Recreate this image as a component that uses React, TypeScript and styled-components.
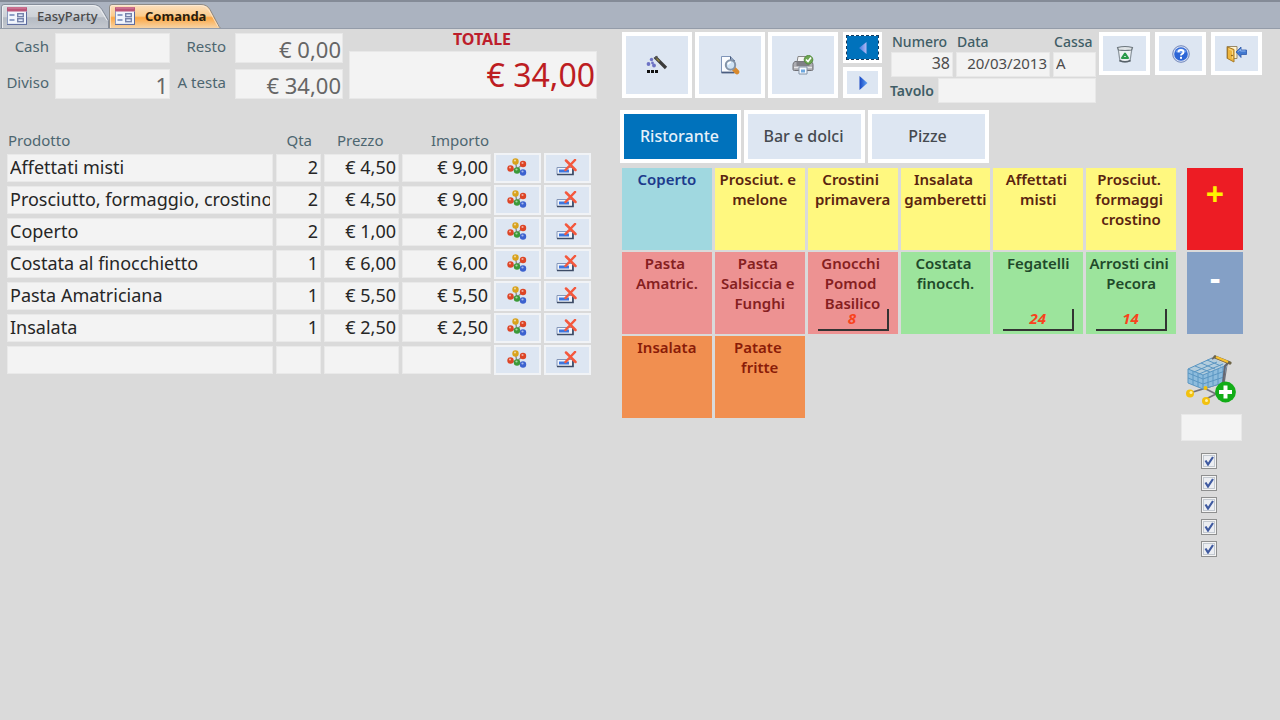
import React, { useState } from "react";
import styled, { createGlobalStyle } from "styled-components";

const GlobalStyle = createGlobalStyle`
  * { box-sizing: border-box; }
  body { margin: 0; background: #dadada; font-family: "Noto Sans", "Open Sans", sans-serif; }
  button, input { font-family: inherit; border-radius: 0; }
`;

const TabStrip = styled.nav`
  display: flex;
  height: 29px;
  padding: 2px 0 0 1px;
  background: #abb3c0;
  border-top: 2px solid #848b97;
  border-bottom: 1px solid #949ca9;
  overflow: hidden;
`;

const FormTab = styled.button<{ $active?: boolean }>`
  position: relative;
  display: flex;
  align-items: center;
  width: ${(p) => (p.$active ? 116 : 108)}px;
  height: 26px;
  padding: 0 0 3px 6px;
  border: 0;
  background: none;
  color: ${(p) => (p.$active ? "#2a1c0c" : "#4a4a4a")};
  font-size: 13px;
  font-weight: ${(p) => (p.$active ? 700 : 500)};
  white-space: nowrap;
`;

const TabShape = styled.svg`
  position: absolute;
  left: 0;
  top: 0;
`;

const TabContent = styled.span`
  position: relative;
  display: flex;
  align-items: center;
  gap: 10px;
`;

const Main = styled.main`
  display: grid;
  grid-template-columns: minmax(0, 593fr) minmax(0, 642fr);
  column-gap: 23px;
  padding: 3px 18px 24px 4px;
`;

const OrderPanel = styled.section``;

const Summary = styled.div`
  display: grid;
  grid-template-columns: 43px 115px 53px 108px minmax(0, 1fr);
  grid-template-rows: 30px 30px;
  gap: 6px;
  padding: 1px 0 0 2px;
`;

const SummaryLabel = styled.label<{ $inset?: number }>`
  padding-right: ${(p) => p.$inset ?? 0}px;
  color: #4d6670;
  font-size: 15px;
  line-height: 27px;
  text-align: right;
  white-space: nowrap;
`;

const Field = styled.input<{ $size?: number; $align?: string }>`
  width: 100%;
  min-width: 0;
  padding: 0 2px;
  border: 1px solid #e8e8e8;
  background: #f3f3f3;
  color: #4c4c4c;
  font-size: ${(p) => p.$size ?? 16}px;
  text-align: ${(p) => p.$align ?? "left"};
`;

const SummaryField = styled(Field)`
  height: 30px;
  padding: 2px 1px 0;
  color: #666;
`;

const TotalBox = styled.div`
  grid-column: 5;
  grid-row: 1 / 3;
  display: flex;
  flex-direction: column;
`;

const TotalLabel = styled.label`
  height: 18px;
  padding-left: 18px;
  color: #bd1d2b;
  font-size: 16px;
  font-weight: 700;
  line-height: 13px;
  text-align: center;
`;

const TotalField = styled(Field)`
  height: 48px;
  padding: 0 1px 1px;
  color: #bd1d22;
`;

const OrderTable = styled.table`
  width: 100%;
  margin-top: 28px;
  padding-right: 3px;
  table-layout: fixed;
  border-collapse: separate;
  border-spacing: 3px 4px;
`;

const HeadCell = styled.th<{ $align?: string; $inset?: number }>`
  height: 19px;
  padding: 0 ${(p) => p.$inset ?? 2}px;
  color: #4d6670;
  font-size: 15px;
  font-weight: 400;
  line-height: 19px;
  text-align: ${(p) => p.$align ?? "left"};
`;

const Cell = styled.td<{ $align?: string }>`
  height: 28px;
  padding: 0 3px 2px;
  background: #f3f3f3;
  box-shadow: inset 0 0 0 1px #e9e9e9;
  color: #262626;
  font-size: 18px;
  font-weight: 400;
  line-height: 26px;
  text-align: ${(p) => p.$align ?? "left"};
`;

const Clip = styled.div`
  overflow: hidden;
  white-space: nowrap;
`;

const ActionCell = styled.td`
  height: 28px;
  padding: 0;
`;

const RowButton = styled.button`
  display: flex;
  align-items: center;
  justify-content: center;
  width: 100%;
  height: 30px;
  margin: -1px 0;
  padding: 0 2px 1px 0;
  border: 2px solid #f1f3f6;
  background: #dde6f2;
`;

const MenuPanel = styled.section``;

const Toolbar = styled.div`
  display: flex;
  align-items: flex-start;
  padding-left: 2px;
`;

const ToolGroup = styled.div<{ $column?: boolean; $gap: number }>`
  display: flex;
  flex: none;
  flex-direction: ${(p) => (p.$column ? "column" : "row")};
  gap: ${(p) => p.$gap}px;
`;

const NavGroup = styled(ToolGroup)`
  margin: 0 7px 0 5px;
`;

const WindowGroup = styled(ToolGroup)`
  margin-left: 3px;
`;

const ToolButton = styled.button<{ $w: number; $h: number; $active?: boolean }>`
  display: flex;
  align-items: center;
  justify-content: center;
  width: ${(p) => p.$w}px;
  height: ${(p) => p.$h}px;
  padding: 0;
  border: 4px solid #fff;
  background: ${(p) => (p.$active ? "#0072bc" : "#dde6f2")};
  outline: ${(p) => (p.$active ? "1px dashed #173a5c" : "none")};
  outline-offset: -4px;
`;

const Details = styled.div`
  display: flex;
  flex: 1;
  flex-direction: column;
  gap: 1px;
  min-width: 0;
`;

const DetailRow = styled.div`
  display: grid;
  grid-template-columns: 62px minmax(0, 1fr) 43px;
  gap: 3px;
  padding-left: 2px;
`;

const DetailItem = styled.div`
  display: flex;
  flex-direction: column;
`;

const DetailLabel = styled.label<{ $strong?: boolean }>`
  padding-left: 1px;
  color: #3f5d66;
  font-size: 14px;
  font-weight: ${(p) => (p.$strong ? 600 : 500)};
  line-height: 20px;
`;

const DetailField = styled(Field)`
  height: 25px;
  padding-bottom: 3px;
`;

const TavoloRow = styled.div`
  display: flex;
  align-items: center;
  gap: 4px;
`;

const Categories = styled.div`
  display: flex;
  gap: 3px;
  margin-top: 7px;
`;

const CategoryButton = styled.button<{ $active?: boolean }>`
  width: 121px;
  height: 53px;
  padding: 0 2px 1px 0;
  border: 4px solid #fff;
  background: ${(p) => (p.$active ? "#0072bc" : "#dde6f2")};
  color: ${(p) => (p.$active ? "#e6f1fa" : "#454a50")};
  font-size: 16px;
  font-weight: 500;
`;

const Board = styled.div`
  display: flex;
  gap: 3px;
  margin-top: 5px;
  padding: 0 19px 0 2px;
`;

const Tiles = styled.div`
  display: grid;
  flex: 1;
  grid-template-columns: repeat(6, minmax(0, 1fr));
  grid-auto-rows: 82px;
  gap: 2px 3px;
  align-content: start;
`;

const tones = {
  blue: ["#a0d8e0", "#1c3a8c"],
  yellow: ["#fff87f", "#5a2410"],
  red: ["#ed9292", "#85201f"],
  green: ["#9ce49c", "#1f4a2a"],
  orange: ["#f18f50", "#8a1c08"],
};

const Tile = styled.button<{ $tone: keyof typeof tones }>`
  position: relative;
  display: flex;
  align-items: flex-start;
  justify-content: center;
  padding: 1px 0 0;
  border: 0;
  background: ${(p) => tones[p.$tone][0]};
  color: ${(p) => tones[p.$tone][1]};
  font-size: 15px;
  font-weight: 600;
  line-height: 20px;
  white-space: pre;
  text-align: center;
`;

const Stock = styled.span`
  position: absolute;
  right: 9px;
  bottom: 3px;
  width: 71px;
  height: 22px;
  border-right: 2px solid #333;
  border-bottom: 2px solid #333;
  color: #f8431d;
  font-size: 15px;
  font-style: italic;
  font-weight: 700;
  line-height: 18px;
`;

const Side = styled.div`
  display: flex;
  flex: none;
  flex-direction: column;
  align-items: center;
  width: 64px;
`;

const StepButton = styled.button<{ $plus?: boolean }>`
  align-self: flex-end;
  width: 56px;
  height: 82px;
  margin-bottom: 2px;
  padding: 0 0 30px;
  border: 0;
  background: ${(p) => (p.$plus ? "#ed1c24" : "#84a0c6")};
  color: ${(p) => (p.$plus ? "#fff200" : "#fff")};
  font-size: 32px;
  font-weight: 700;
  line-height: 28px;
`;

const CartButton = styled.button`
  margin: 19px 0 9px;
  padding: 0;
  border: 0;
  background: none;
  line-height: 0;
`;

const SideField = styled(Field)`
  flex: none;
  width: 61px;
  height: 27px;
`;

const Checks = styled.div`
  display: flex;
  flex-direction: column;
  gap: 6px;
  margin: 12px 4px 0 0;
`;

const CheckBox = styled.input`
  width: 16px;
  height: 16px;
  margin: 0;
  appearance: none;
  border: 1px solid #8e8f8f;
  background: #f4f4f4;
  box-shadow: inset 0 0 0 1px #f4f4f4, inset 0 0 0 2px #c3c9d0;
  &:checked {
    background: #eceef2 url("data:image/svg+xml,%3Csvg xmlns='http://www.w3.org/2000/svg' viewBox='0 0 14 14'%3E%3Cpath d='M3.5 6.5L6 10.5L11 3' fill='none' stroke='%233f5aa0' stroke-width='2.2'/%3E%3C/svg%3E") center / 14px;
  }
`;

const FormIcon = () => (
  <svg width="20" height="18" viewBox="0 0 20 18">
    <rect x=".5" y=".5" width="19" height="17" rx="1" fill="#f1f5fc" stroke="#8b9abf" />
    <rect x="0" y="0" width="20" height="4.500" rx="1" fill="#bb5578" />
    <path d="M1 1h18" stroke="#d88aa4" />
    <path d="M0 17.400h20M19.500 5v12" stroke="#5b6a9e" />
    <path d="M2.500 8h5M2.500 13h5" stroke="#6d82b5" strokeWidth="1.400" />
    <rect x="10.700" y="6.700" width="5.600" height="3" fill="#e3ebfa" stroke="#7683ab" strokeWidth="1.400" />
    <rect x="10.700" y="11.700" width="5.600" height="3" fill="#e3ebfa" stroke="#7683ab" strokeWidth="1.400" />
  </svg>
);

const WandIcon = () => (
  <svg width="22" height="20" viewBox="0 0 22 20">
    <path d="M9 2l11 11" stroke="#3a3a3a" strokeWidth="3.200" />
    <path d="M8 3.500l3.500-2" stroke="#555" strokeWidth="1.500" />
    <path d="M10.500 3.500l3 3" stroke="#8f8540" strokeWidth="1.500" />
    <g fill="#6d73c4">
      <circle cx="5.500" cy="4.500" r="1.700" /><circle cx="2.500" cy="9" r="1.900" />
      <circle cx="6.500" cy="8" r="1.400" /><circle cx="8" cy="10.500" r="1.900" />
    </g>
    <path d="M1 15h3v3H1zM5 15h3v3H5zM9 15h3v3H9z" fill="#111" />
  </svg>
);

const PreviewIcon = () => (
  <svg width="20" height="20" viewBox="0 0 20 20">
    <path d="M1.500 1.500h9l4 4v12h-13z" fill="#fafcff" stroke="#7f95b8" />
    <path d="M10.500 1.500v4h4" fill="#8fa3bf" stroke="#46597c" />
    <path d="M1.500 17.500h13" stroke="#4b5e80" strokeWidth="1.800" />
    <path d="M14 14l3 3" stroke="#d8892c" strokeWidth="4.600" strokeLinecap="round" />
    <circle cx="10.500" cy="10" r="4.700" fill="#cfe3f5" stroke="#8494a8" strokeWidth="2" />
    <path d="M8 9.500a3 3 0 0 1 3-2.300" fill="none" stroke="#fff" strokeWidth="1.500" />
  </svg>
);

const PrinterIcon = () => (
  <svg width="22" height="20" viewBox="0 0 22 20">
    <path d="M6 1.500h9l1 6H5z" fill="#f5f5f5" stroke="#888" />
    <path d="M3 6.500h16q2 1 2 3v5q0 1-1.500 1h-17Q1 15.500 1 14.500v-5q0-2 2-3z" fill="#acacb1" stroke="#707075" />
    <path d="M4.500 6.500v4.500h13V6.500" fill="#808086" />
    <path d="M2 12.500h18" stroke="#e6e6e8" strokeWidth="1.500" />
    <path d="M7 12h8v7H7z" fill="#f6faff" stroke="#8393a6" />
    <path d="M9 14.500h4v3H9z" fill="#6ea8df" />
    <circle cx="16.500" cy="4.800" r="4.300" fill="#6da653" stroke="#548a3d" />
    <path d="M14 4.500l2 2 3-4" fill="none" stroke="#fff" strokeWidth="1.700" />
  </svg>
);

const ArrowIcon = ({ left = false }: { left?: boolean }) => (
  <svg width="10" height="14" viewBox="0 0 10 14">
    <defs>
      <linearGradient id={left ? "arrowL" : "arrowR"}>
        <stop offset="0" stopColor={left ? "#3d7ae0" : "#1747c4"} />
        <stop offset="1" stopColor={left ? "#b3b9f4" : "#63a5f4"} />
      </linearGradient>
    </defs>
    <path d={left ? "M8.500 1v12L1 7z" : "M1.500 0v14L9.500 7z"} fill={`url(#${left ? "arrowL" : "arrowR"})`} />
  </svg>
);

const BinIcon = () => (
  <svg width="18" height="18" viewBox="0 0 18 18">
    <path d="M2 3l2 13q5 2 10 0l2-13z" fill="#eef1f3" stroke="#8b959d" strokeWidth="1.200" />
    <path d="M3.500 15.500q5.500 2.500 11 0" fill="none" stroke="#58626a" strokeWidth="1.700" />
    <path d="M1.500 2.500Q9 .5 16.500 2.500l-1 2.500Q9 6 2.500 5z" fill="#dfe4e7" stroke="#6d777e" strokeWidth="1.100" />
    <path d="M9 8.500l3 4.500H6z" fill="none" stroke="#2a9a49" strokeWidth="2.100" strokeLinejoin="round" />
  </svg>
);

const HelpIcon = () => (
  <svg width="18" height="18" viewBox="0 0 18 18">
    <circle cx="9" cy="9" r="8.300" fill="#d5dff2" stroke="#7387bb" />
    <circle cx="9" cy="9" r="6.800" fill="#2e66d6" />
    <path d="M3.500 7a6 6 0 0 1 11 0q-5.500 2-11 0z" fill="#6b9aee" />
    <path d="M6.500 7.200q0-2.200 2.500-2.200t2.500 2q0 1.400-1.500 2-1 .5-1 1.500" fill="none" stroke="#fff" strokeWidth="1.900" />
    <rect x="8" y="11.800" width="2" height="2" fill="#fff" />
  </svg>
);

const ExitIcon = () => (
  <svg width="21" height="18" viewBox="0 0 21 18">
    <path d="M1 1.500h10v12H1z" fill="#fff4d2" stroke="#9a8a68" />
    <path d="M1.500 2L8 4.500V17l-6.500-3.500z" fill="#eeb63e" stroke="#a87a26" />
    <path d="M2.800 4l3.700 1.500v8" fill="none" stroke="#fbdc8a" />
    <circle cx="6" cy="10.500" r=".8" fill="#6b4a12" />
    <path d="M10 7l5-5v3h5.500v4.500H15v3z" fill="#4179d0" stroke="#2f58ab" strokeWidth=".8" />
    <path d="M12 6.800l2.500-2.500v1.700h5" fill="none" stroke="#8fb6ee" />
  </svg>
);

const BallsIcon = () => (
  <svg width="20" height="19" viewBox="0 0 20 19">
    <path d="M8.500 4l1.500 8M16 6l-6 5M4 11l6 1 6 3" stroke="#8d8d8d" strokeWidth="1.400" fill="none" />
    <circle cx="8.500" cy="3.500" r="3.200" fill="#d9a21c" />
    <circle cx="16" cy="6" r="3.200" fill="#dd4526" />
    <circle cx="3.500" cy="10.500" r="3.200" fill="#dd4526" />
    <circle cx="10" cy="12.500" r="3.200" fill="#3c9a38" />
    <circle cx="16" cy="14.500" r="3.200" fill="#3c62cf" />
    <g fill="#fff" opacity=".55">
      <circle cx="8" cy="2.500" r="1.100" /><circle cx="15.500" cy="5" r="1.100" /><circle cx="3" cy="9.500" r="1.100" />
      <circle cx="9.500" cy="11.500" r="1.100" /><circle cx="15.500" cy="13.500" r="1.100" />
    </g>
  </svg>
);

const DeleteRowIcon = () => (
  <svg width="21" height="17" viewBox="0 0 21 17">
    <path d="M1 8.500h15.500v7H1z" fill="#eff4fc" stroke="#8496b8" />
    <path d="M1 15.500h16v-7" fill="none" stroke="#3d4b66" strokeWidth="1.700" />
    <path d="M3 10.500h10v3H3z" fill="#3f76dd" />
    <path d="M10 1.500l9.500 9.500M19 1L9.500 11" stroke="#f4583d" strokeWidth="2.500" strokeLinecap="round" />
  </svg>
);

const CartIcon = () => (
  <svg width="50" height="50" viewBox="0 0 50 50">
    <path d="M7 37L38 27l3-20M16 32l18 9M7 37l10-3M20 44l16-8" fill="none" stroke="#73737b" strokeWidth="1.800" />
    <path d="M2 14L26 3l15 7-4 18-20 6L2 28z" fill="#8dbcdd" />
    <path d="M2 14L26 3l15 7-24 10z" fill="#b3cddd" />
    <path d="M2 14l15 6 24-10M2 14L26 3M2 14v14l15 6M17 20v14l20-6M2 18l15 6 22-8M2 23l15 6 21-7M7 16v14M12 18v14M22 18v14M27 16v14M32 14v15M37 12v15M9 11l15 6M15 8l14 6M21 5l14 6M8 17l23-10M13 19l24-10" fill="none" stroke="#5b96c2" strokeWidth="1" />
    <path d="M26 4l4-3M37 28l2-17 4-4" fill="none" stroke="#666670" strokeWidth="2" />
    <path d="M29 2l15 6" stroke="#6f6547" strokeWidth="3.200" strokeLinecap="round" />
    <path d="M30 2l12 5" stroke="#f8c12c" strokeWidth="2.400" />
    <circle cx="4" cy="38.500" r="4" fill="#f2c10e" /><circle cx="5" cy="37.500" r="1.500" fill="#fff0a0" />
    <circle cx="20" cy="46" r="4" fill="#f2c10e" /><circle cx="20.500" cy="45.500" r="1.500" fill="#fff0a0" />
    <circle cx="19.500" cy="33" r="2" fill="#f2c10e" />
    <circle cx="39.500" cy="37" r="10.400" fill="#12ad17" />
    <path d="M39.500 30.500v13M33 37h13" stroke="#fff" strokeWidth="4" />
  </svg>
);

const rows = [
  ["Affettati misti", "2", "€ 4,50", "€ 9,00"],
  ["Prosciutto, formaggio, crostino", "2", "€ 4,50", "€ 9,00"],
  ["Coperto", "2", "€ 1,00", "€ 2,00"],
  ["Costata al finocchietto", "1", "€ 6,00", "€ 6,00"],
  ["Pasta Amatriciana", "1", "€ 5,50", "€ 5,50"],
  ["Insalata", "1", "€ 2,50", "€ 2,50"],
  ["", "", "", ""],
];

const tiles: { text: string; tone: keyof typeof tones; stock?: number }[] = [
  { text: "Coperto", tone: "blue" },
  { text: "Prosciut. e \nmelone", tone: "yellow" },
  { text: "Crostini \nprimavera", tone: "yellow" },
  { text: "Insalata \ngamberetti", tone: "yellow" },
  { text: "Affettati \nmisti", tone: "yellow" },
  { text: "Prosciut. \nformaggi \ncrostino", tone: "yellow" },
  { text: "Pasta \nAmatric.", tone: "red" },
  { text: "Pasta \nSalsiccia e \nFunghi", tone: "red" },
  { text: "Gnocchi \nPomod \nBasilico", tone: "red", stock: 8 },
  { text: "Costata \nfinocch.", tone: "green" },
  { text: "Fegatelli", tone: "green", stock: 24 },
  { text: "Arrosti cini \nPecora", tone: "green", stock: 14 },
  { text: "Insalata", tone: "orange" },
  { text: "Patate \nfritte", tone: "orange" },
];

const categories = ["Ristorante", "Bar e dolci", "Pizze"];

export default function App() {
  const [category, setCategory] = useState("Ristorante");
  return (
    <>
      <GlobalStyle />
      <TabStrip>
        <FormTab>
          <TabShape width="108" height="26" viewBox="0 0 108 26">
            <defs>
              <linearGradient id="tabGrey" x1="0" y1="0" x2="0" y2="1">
                <stop offset="0" stopColor="#d9dde2" />
                <stop offset=".48" stopColor="#cdd1d7" />
                <stop offset=".52" stopColor="#b4bac3" />
                <stop offset="1" stopColor="#c8ccd2" />
              </linearGradient>
            </defs>
            <path d="M.5 26V3Q.5.5 3 .5H92q6 0 9 5l6.500 11V26" fill="url(#tabGrey)" stroke="#858d9a" />
            <path d="M1.500 25V3Q2 1.500 4 1.500H92q5 0 8 5l6 10" fill="none" stroke="#eceef1" />
          </TabShape>
          <TabContent><FormIcon />EasyParty</TabContent>
        </FormTab>
        <FormTab $active>
          <TabShape width="118" height="26" viewBox="0 0 118 26">
            <defs>
              <linearGradient id="tabOrange" x1="0" y1="0" x2="0" y2="1">
                <stop offset="0" stopColor="#fbe0bf" />
                <stop offset=".45" stopColor="#fccb8c" />
                <stop offset=".52" stopColor="#fca744" />
                <stop offset="1" stopColor="#f6dcb8" />
              </linearGradient>
            </defs>
            <path d="M.5 26V3Q.5.5 3 .5H92q6 0 9 5l8 15q2 5 7 5.500" fill="url(#tabOrange)" stroke="#8d8a86" />
            <path d="M1.500 25V3Q2 1.500 4 1.500H92q5 0 8 5l9 16" fill="none" stroke="#fdeedb" opacity=".7" />
          </TabShape>
          <TabContent><FormIcon />Comanda</TabContent>
        </FormTab>
      </TabStrip>

      <Main>
        <OrderPanel>
          <Summary>
            <SummaryLabel htmlFor="cash">Cash</SummaryLabel>
            <SummaryField id="cash" $size={22} $align="right" />
            <SummaryLabel htmlFor="resto" $inset={3}>Resto</SummaryLabel>
            <SummaryField id="resto" $size={22} $align="right" defaultValue="€ 0,00" />
            <TotalBox>
              <TotalLabel htmlFor="totale">TOTALE</TotalLabel>
              <TotalField id="totale" $size={32} $align="right" defaultValue="€ 34,00" />
            </TotalBox>
            <SummaryLabel htmlFor="diviso">Diviso</SummaryLabel>
            <SummaryField id="diviso" $size={22} $align="right" defaultValue="1" />
            <SummaryLabel htmlFor="testa" $inset={3}>A testa</SummaryLabel>
            <SummaryField id="testa" $size={22} $align="right" defaultValue="€ 34,00" />
          </Summary>

          <OrderTable>
            <colgroup>
              <col />
              <col width="45" />
              <col width="75" />
              <col width="89" />
              <col width="47" />
              <col width="47" />
            </colgroup>
            <thead>
              <tr>
                <HeadCell $inset={1}>Prodotto</HeadCell>
                <HeadCell $align="right" $inset={9}>Qta</HeadCell>
                <HeadCell $inset={13}>Prezzo</HeadCell>
                <HeadCell $align="right">Importo</HeadCell>
                <HeadCell />
                <HeadCell />
              </tr>
            </thead>
            <tbody>
              {rows.map(([name, qty, price, amount], i) => (
                <tr key={i}>
                  <Cell><Clip>{name}</Clip></Cell>
                  <Cell $align="right">{qty}</Cell>
                  <Cell $align="right">{price}</Cell>
                  <Cell $align="right">{amount}</Cell>
                  <ActionCell><RowButton aria-label="Varianti"><BallsIcon /></RowButton></ActionCell>
                  <ActionCell><RowButton aria-label="Elimina"><DeleteRowIcon /></RowButton></ActionCell>
                </tr>
              ))}
            </tbody>
          </OrderTable>
        </OrderPanel>

        <MenuPanel>
          <Toolbar>
            <ToolGroup $gap={3}>
              <ToolButton $w={70} $h={66} aria-label="Nuova comanda"><WandIcon /></ToolButton>
              <ToolButton $w={70} $h={66} aria-label="Anteprima"><PreviewIcon /></ToolButton>
              <ToolButton $w={70} $h={66} aria-label="Stampa"><PrinterIcon /></ToolButton>
            </ToolGroup>
            <NavGroup $column $gap={4}>
              <ToolButton $w={39} $h={31} $active aria-label="Precedente"><ArrowIcon left /></ToolButton>
              <ToolButton $w={39} $h={31} aria-label="Successiva"><ArrowIcon /></ToolButton>
            </NavGroup>
            <Details>
              <DetailRow>
                <DetailItem>
                  <DetailLabel htmlFor="numero">Numero</DetailLabel>
                  <DetailField id="numero" $align="right" defaultValue="38" />
                </DetailItem>
                <DetailItem>
                  <DetailLabel htmlFor="data">Data</DetailLabel>
                  <DetailField id="data" $size={15} $align="right" defaultValue="20/03/2013" />
                </DetailItem>
                <DetailItem>
                  <DetailLabel htmlFor="cassa">Cassa</DetailLabel>
                  <DetailField id="cassa" $size={15} defaultValue="A" />
                </DetailItem>
              </DetailRow>
              <TavoloRow>
                <DetailLabel htmlFor="tavolo" $strong>Tavolo</DetailLabel>
                <DetailField id="tavolo" />
              </TavoloRow>
            </Details>
            <WindowGroup $gap={5}>
              <ToolButton $w={51} $h={43} aria-label="Cestino"><BinIcon /></ToolButton>
              <ToolButton $w={51} $h={43} aria-label="Aiuto"><HelpIcon /></ToolButton>
              <ToolButton $w={51} $h={43} aria-label="Esci"><ExitIcon /></ToolButton>
            </WindowGroup>
          </Toolbar>

          <Categories>
            {categories.map((c) => (
              <CategoryButton key={c} $active={c === category} onClick={() => setCategory(c)}>{c}</CategoryButton>
            ))}
          </Categories>

          <Board>
            <Tiles>
              {tiles.map((t, i) => (
                <Tile key={i} $tone={t.tone}>
                  {t.text}
                  {t.stock !== undefined && <Stock>{t.stock}</Stock>}
                </Tile>
              ))}
            </Tiles>
            <Side>
              <StepButton $plus>+</StepButton>
              <StepButton>-</StepButton>
              <CartButton aria-label="Aggiungi al carrello"><CartIcon /></CartButton>
              <SideField aria-label="Articolo" />
              <Checks>
                {[1, 2, 3, 4, 5].map((n) => (
                  <CheckBox key={n} type="checkbox" defaultChecked aria-label={`Opzione ${n}`} />
                ))}
              </Checks>
            </Side>
          </Board>
        </MenuPanel>
      </Main>
    </>
  );
}
